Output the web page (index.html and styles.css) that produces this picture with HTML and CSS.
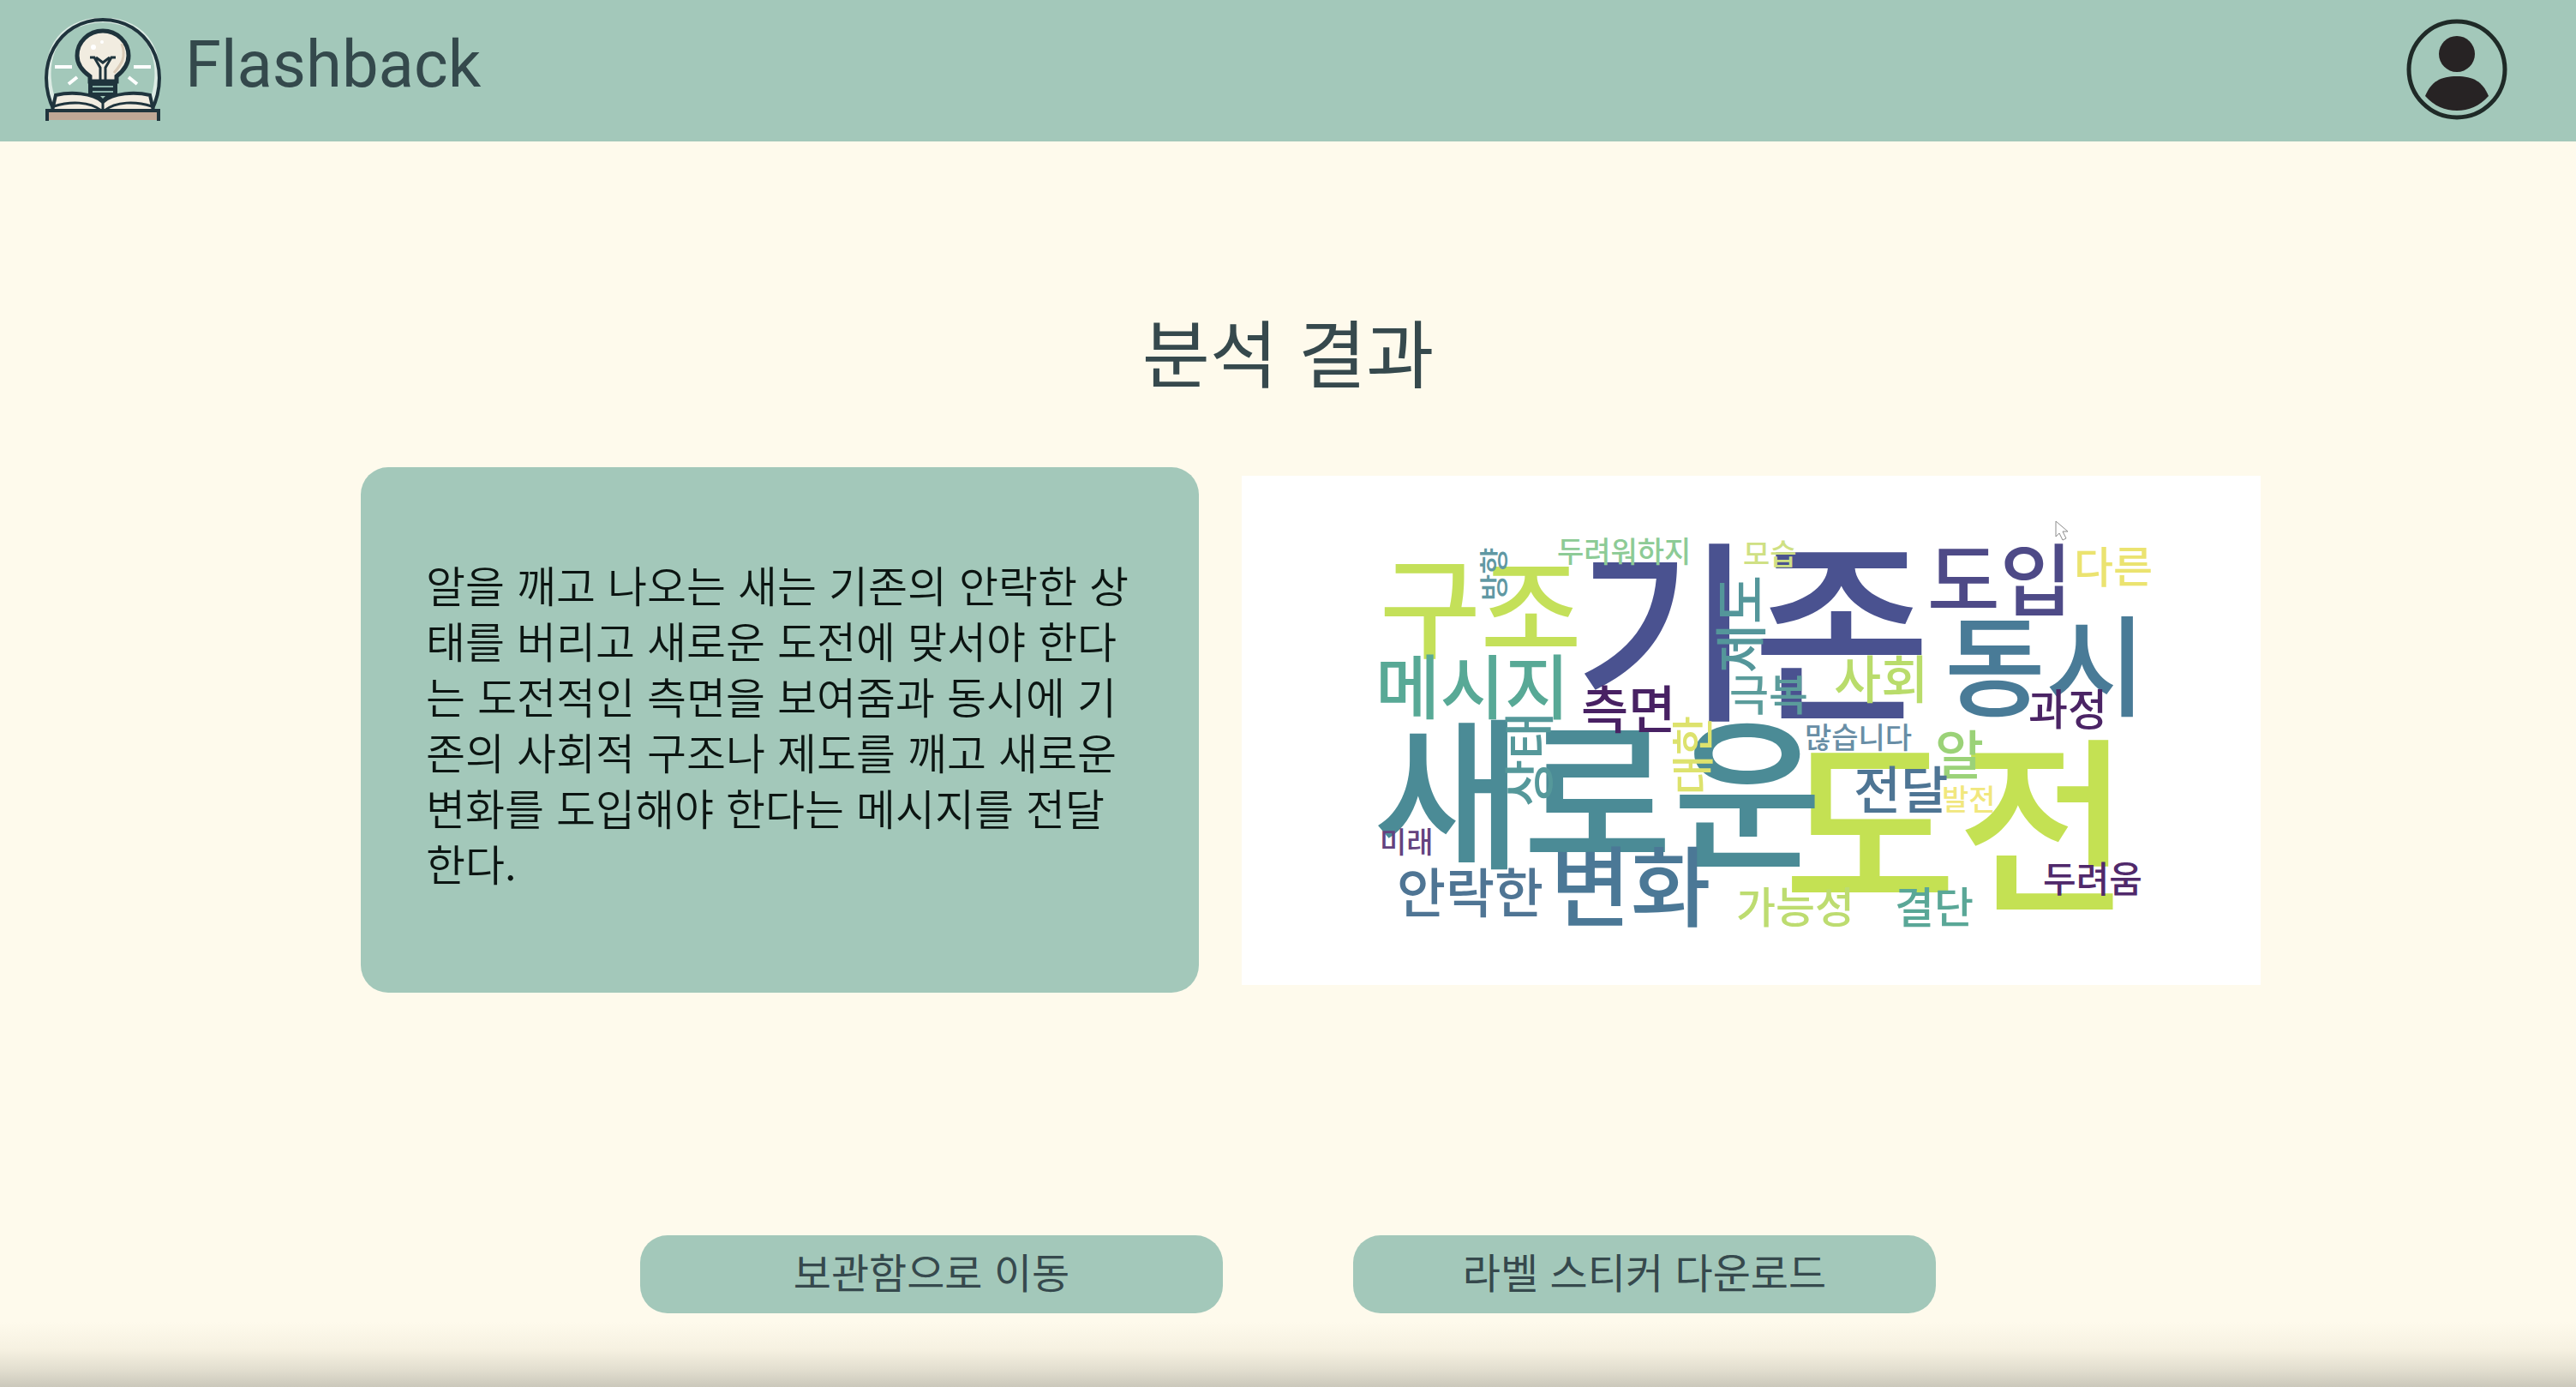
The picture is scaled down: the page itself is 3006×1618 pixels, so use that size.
FILE: index.html
```html
<!DOCTYPE html>
<html lang="ko">
<head>
<meta charset="utf-8">
<meta name="viewport" content="width=device-width, initial-scale=1">
<title>Flashback</title>
<link rel="stylesheet" href="styles.css">
</head>
<body>
<header class="header">
  <a class="brand" href="#">
    <svg class="brand-logo" viewBox="0 0 136 120" aria-hidden="true">
      <path d="M12 102C-4 62 2 5 68 2c66 3 72 60 56 100" fill="none" stroke="#dcebe4" stroke-width="6"/>
      <path d="M11 108C-14 56 16 2 68 2s82 54 57 106" fill="none" stroke="#1f343d" stroke-width="4"/>
      <path d="M12 57h20M104 57h20M38 69l-10 8M98 69l10 8" stroke="#fff" stroke-width="4" fill="none"/>
      <path d="M53 74V68C43 61 38 54 38 44a29 28 0 0 1 60 0c0 10-5 17-14 24v6z" fill="#f1ece0" stroke="#1f343d" stroke-width="5"/>
      <path d="M90 30c6 16-1 25-9 34" fill="none" stroke="#dacbb7" stroke-width="3"/>
      <circle cx="57" cy="34" r="3" fill="#fff"/><circle cx="67" cy="28" r="2" fill="#fff"/>
      <path d="M53 46h5l7 12v16M83 46h-5l-7 12v16M60 46l8 6 8-6" fill="none" stroke="#1f343d" stroke-width="3"/>
      <path d="M51 73h34v17l-17 10-17-10z" fill="#1f343d"/>
      <path d="M56 80h24M56 86h24" stroke="#8db4ab" stroke-width="2"/>
      <path d="M65 91h6l-3 3z" fill="#a3c8ba"/>
      <path d="M13 90c17-4 43-3 55 8 12-11 38-12 55-8l4 18H9z" fill="#f1ece0" stroke="#1f343d" stroke-width="4"/>
      <path d="M11 103c18-6 42-6 55 5M125 103c-18-6-42-6-55 5M68 98v10" fill="none" stroke="#1f343d" stroke-width="3"/>
      <path d="M3 108h130v11H3z" fill="#bfa796"/>
      <path d="M3 120v-12h130v12" fill="none" stroke="#1f343d" stroke-width="4"/>
    </svg>
    <span class="brand-name">Flashback</span>
  </a>
  <button class="profile" type="button" aria-label="프로필">
    <svg viewBox="0 0 118 118" aria-hidden="true">
      <circle cx="59" cy="59" r="56" fill="none" stroke="#1f2a27" stroke-width="5"/>
      <circle cx="59" cy="41" r="21" fill="#272324"/>
      <path d="M22 90C29 73 40 67 59 67s30 6 37 23c-11 12-23 17-37 17s-26-5-37-17z" fill="#272324"/>
    </svg>
  </button>
</header>

<main class="main">
  <h1 class="title">분석 결과</h1>

  <section class="result">
    <article class="summary">
      <p class="summary-text">알을 깨고 나오는 새는 기존의 안락한 상태를 버리고 새로운 도전에 맞서야 한다는 도전적인 측면을 보여줌과 동시에 기존의 사회적 구조나 제도를 깨고 새로운 변화를 도입해야 한다는 메시지를 전달한다.</p>
    </article>
    <svg class="cloud" viewBox="0 0 1189 594" role="img" aria-label="워드 클라우드">
      <g font-size="226" fill="#4a5290"><text x="388" y="268">기존</text></g>
      <g font-size="220" fill="#c4e153"><text x="632" y="492">도전</text></g>
      <g font-size="190" fill="#4b8b96"><text x="153" y="443">새로운</text></g>
      <g font-size="128">
        <text x="161" y="203" fill="#c4e059">구조</text>
        <text x="820" y="271" fill="#497b97">동시</text>
      </g>
      <g font-size="102"><text x="360" y="518" fill="#4b7896">변화</text></g>
      <g font-size="92"><text x="800" y="156" fill="#4e4a87">도입</text></g>
      <g font-size="82"><text x="156" y="277" fill="#58a996">메시지</text></g>
      <g font-size="62">
        <text x="181" y="510" fill="#4f7594">안락한</text>
        <text x="809" y="349" fill="#9bd278">알</text>
        <text transform="translate(606 230) rotate(-90)" fill="#54969a">제도</text>
      </g>
      <g font-size="60">
        <text x="396" y="295" fill="#482163">측면</text>
        <text x="691" y="260" fill="#b9dc6b">사회</text>
        <text x="714" y="389" fill="#4e7594">전달</text>
        <text transform="translate(358 386) rotate(-90)" fill="#55989a">상태</text>
      </g>
      <g font-size="50">
        <text x="971" y="125" fill="#ebe370">다른</text>
        <text x="569" y="274" fill="#5b9c9b">극복</text>
        <text x="918" y="291" fill="#4b2465">과정</text>
        <text x="577" y="522" fill="#bddc70">가능성</text>
        <text x="762" y="522" fill="#5aa797">결단</text>
        <text transform="translate(545 372) rotate(-90)" fill="#dde26d">대한</text>
      </g>
      <g font-size="42"><text x="935" y="486" fill="#50296b">두려움</text></g>
      <g font-size="34">
        <text x="368" y="101" fill="#8dcb96">두려워하지</text>
        <text x="585" y="104" fill="#cfe084">모습</text>
        <text x="657" y="318" fill="#688ea6">많습니다</text>
        <text x="817" y="390" fill="#f1e77e">발전</text>
        <text x="161" y="440" fill="#64437f">미래</text>
        <text transform="translate(307 146) rotate(-90)" fill="#6098a3">방향</text>
      </g>
      <path d="M950 53v18l4-4 4 8 4-2-4-8h6z" fill="#fff" stroke="#8c8c8c" stroke-width="1"/>
    </svg>
  </section>

  <div class="actions">
    <button class="action" type="button">보관함으로 이동</button>
    <button class="action" type="button">라벨 스티커 다운로드</button>
  </div>
</main>
</body>
</html>
```
FILE: styles.css
```css
* {
  box-sizing: border-box;
}

body {
  margin: 0;
  min-height: 100vh;
  background:
    linear-gradient(to top, #cbc8bb, #e2decf 20px, #f6f1e1 44px, #fefaec 76px) bottom / 100% 76px no-repeat,
    #fefaec;
  color: #36494d;
  font-family: "Noto Sans CJK KR", sans-serif;
}

.header {
  display: flex;
  align-items: center;
  justify-content: space-between;
  height: 165px;
  padding: 0 80px 4px 52px;
  background: #a3c8ba;
}

.brand {
  display: flex;
  align-items: center;
  gap: 28px;
  color: #34494c;
  text-decoration: none;
}

.brand-logo {
  width: 136px;
  height: 120px;
}

.brand-name {
  padding-bottom: 12px;
  font-family: Roboto, sans-serif;
  font-size: 76px;
  line-height: 96px;
}

.profile {
  width: 118px;
  height: 118px;
  padding: 0;
  border: 0;
  background: none;
}

.profile svg {
  display: block;
}

.main {
  padding: 184px 0 84px;
}

.title {
  margin: 0;
  font-size: 86px;
  font-weight: 400;
  line-height: 120px;
  text-align: center;
}

.result {
  display: grid;
  grid-template-columns: 978fr 1189fr;
  gap: 50px;
  align-items: center;
  padding: 76px 368px 0 421px;
}

.summary {
  padding: 104px 76px 119px;
  border-radius: 32px;
  background: #a3c8ba;
}

.summary-text {
  margin: 0;
  color: #0c1512;
  font-size: 50px;
  font-weight: 350;
  line-height: 65px;
  word-break: break-all;
}

.cloud {
  display: block;
  width: 100%;
  background: #fff;
  font-weight: 500;
}

.actions {
  display: flex;
  justify-content: center;
  gap: 152px;
  margin-top: 283px;
}

.action {
  width: 680px;
  height: 91px;
  padding: 0 0 10px;
  border: 0;
  border-radius: 32px;
  background: #a3c8ba;
  color: #36494d;
  font-family: inherit;
  font-size: 48px;
  font-weight: 400;
}
```
